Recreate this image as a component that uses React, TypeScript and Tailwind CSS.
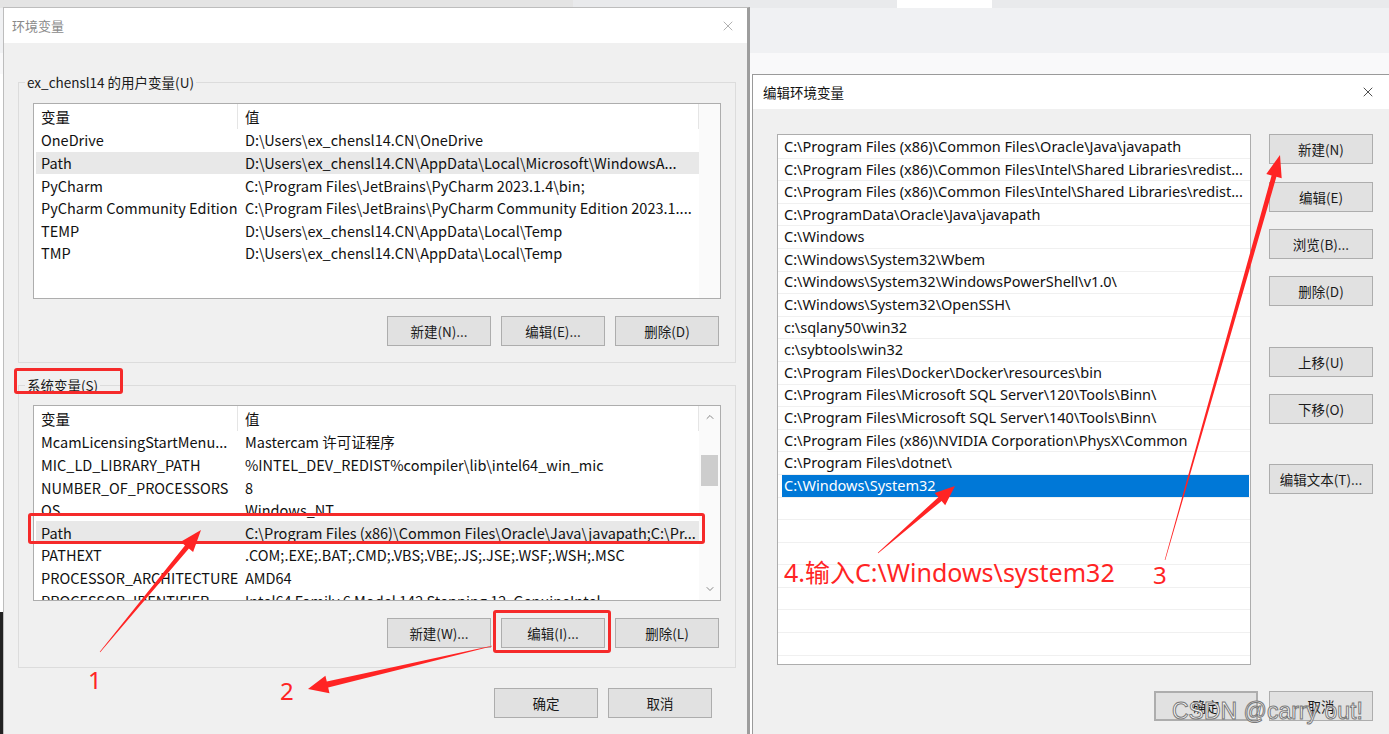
import type { ReactNode } from "react";
import { X, ChevronUp, ChevronDown } from "lucide-react";

const cjk = "font-['Noto_Sans_CJK_SC','Noto_Sans',sans-serif]";
const seg = "font-['Noto_Sans','Noto_Sans_CJK_SC',sans-serif]";

const userVars: [string, string][] = [
  ["OneDrive", "D:\\Users\\ex_chensl14.CN\\OneDrive"],
  ["Path", "D:\\Users\\ex_chensl14.CN\\AppData\\Local\\Microsoft\\WindowsA..."],
  ["PyCharm", "C:\\Program Files\\JetBrains\\PyCharm 2023.1.4\\bin;"],
  ["PyCharm Community Edition", "C:\\Program Files\\JetBrains\\PyCharm Community Edition 2023.1...."],
  ["TEMP", "D:\\Users\\ex_chensl14.CN\\AppData\\Local\\Temp"],
  ["TMP", "D:\\Users\\ex_chensl14.CN\\AppData\\Local\\Temp"],
];

const sysVars: [string, string][] = [
  ["McamLicensingStartMenu...", "Mastercam 许可证程序"],
  ["MIC_LD_LIBRARY_PATH", "%INTEL_DEV_REDIST%compiler\\lib\\intel64_win_mic"],
  ["NUMBER_OF_PROCESSORS", "8"],
  ["OS", "Windows_NT"],
  ["Path", "C:\\Program Files (x86)\\Common Files\\Oracle\\Java\\javapath;C:\\Pr..."],
  ["PATHEXT", ".COM;.EXE;.BAT;.CMD;.VBS;.VBE;.JS;.JSE;.WSF;.WSH;.MSC"],
  ["PROCESSOR_ARCHITECTURE", "AMD64"],
  ["PROCESSOR_IDENTIFIER", "Intel64 Family 6 Model 142 Stepping 12, GenuineIntel"],
];

const paths = [
  "C:\\Program Files (x86)\\Common Files\\Oracle\\Java\\javapath",
  "C:\\Program Files (x86)\\Common Files\\Intel\\Shared Libraries\\redist...",
  "C:\\Program Files (x86)\\Common Files\\Intel\\Shared Libraries\\redist...",
  "C:\\ProgramData\\Oracle\\Java\\javapath",
  "C:\\Windows",
  "C:\\Windows\\System32\\Wbem",
  "C:\\Windows\\System32\\WindowsPowerShell\\v1.0\\",
  "C:\\Windows\\System32\\OpenSSH\\",
  "c:\\sqlany50\\win32",
  "c:\\sybtools\\win32",
  "C:\\Program Files\\Docker\\Docker\\resources\\bin",
  "C:\\Program Files\\Microsoft SQL Server\\120\\Tools\\Binn\\",
  "C:\\Program Files\\Microsoft SQL Server\\140\\Tools\\Binn\\",
  "C:\\Program Files (x86)\\NVIDIA Corporation\\PhysX\\Common",
  "C:\\Program Files\\dotnet\\",
  "C:\\Windows\\System32",
];

function Btn({ children, className = "" }: { children: ReactNode; className?: string }) {
  return (
    <button
      className={`flex h-[30px] w-[104px] shrink-0 items-center justify-center border border-[#adadad] bg-[#e1e1e1] text-[13.5px] text-[#1a1a1a] ${className}`}
    >
      {children}
    </button>
  );
}

function VarList({ rows, selected, scroll }: { rows: [string, string][]; selected: number; scroll?: boolean }) {
  return (
    <div className="flex h-[196px] overflow-hidden border border-[#adadad] bg-white text-[14.5px] text-[#111]">
      <div className="min-w-0 flex-1 overflow-hidden pl-[2px]">
        <div className="flex h-[25px] items-center">
          <div className="flex h-full w-[202px] items-center border-r border-[#e5e5e5] pl-[5px]">变量</div>
          <div className="flex h-full flex-1 items-center border-r border-[#e5e5e5] pl-[7px]">值</div>
        </div>
        {rows.map(([k, v], i) => (
          <div
            key={k + i}
            className={`flex h-[22.6px] items-center whitespace-nowrap ${i === selected ? "bg-[#e8e8e8]" : ""}`}
          >
            <div className="w-[202px] shrink-0 overflow-hidden pl-[5px]">{k}</div>
            <div className="min-w-0 flex-1 overflow-hidden pl-[7px]">{v}</div>
          </div>
        ))}
      </div>
      <div className="flex w-[21px] shrink-0 flex-col items-center bg-[#fafafa]">
        {scroll && (
          <>
            <div className="flex h-[22px] items-center justify-center text-[#606060]">
              <ChevronUp size={12} strokeWidth={1.5} />
            </div>
            <div className="flex-1">
              <div className="mt-[27px] h-[31px] w-[17px] bg-[#cdcdcd]" />
            </div>
            <div className="flex h-[22px] items-center justify-center text-[#606060]">
              <ChevronDown size={12} strokeWidth={1.5} />
            </div>
          </>
        )}
      </div>
    </div>
  );
}

function arrow(x1: number, y1: number, x2: number, y2: number, w0: number, w1: number, L: number, H: number) {
  const dx = x2 - x1;
  const dy = y2 - y1;
  const len = Math.hypot(dx, dy);
  const ux = dx / len;
  const uy = dy / len;
  const nx = -uy;
  const ny = ux;
  const bx = x2 - ux * L;
  const by = y2 - uy * L;
  const pts = [
    [x1 + (nx * w0) / 2, y1 + (ny * w0) / 2],
    [bx + (nx * w1) / 2, by + (ny * w1) / 2],
    [bx + nx * H, by + ny * H],
    [x2, y2],
    [bx - nx * H, by - ny * H],
    [bx - (nx * w1) / 2, by - (ny * w1) / 2],
    [x1 - (nx * w0) / 2, y1 - (ny * w0) / 2],
  ];
  return pts.map((p) => `${p[0].toFixed(1)},${p[1].toFixed(1)}`).join(" ");
}

export default function App() {
  return (
    <div className={`relative h-[734px] w-[1389px] overflow-hidden bg-white ${cjk}`}>
      {/* browser behind the dialogs */}
      <div className="flex h-[8px]">
        <div className="w-[573px] bg-[#e4e4e4]" />
        <div className="w-[324px] bg-[#e9eaec]" />
        <div className="w-[95px] bg-white" />
        <div className="flex-1 bg-[#e9eaec]" />
      </div>
      <div className="h-[45px] bg-[#f0f1f3]" />
      <div className="h-[21px] bg-[#f9f9fa]" />
      <div className="absolute bottom-0 left-0 h-[122px] w-[3px] bg-[#222]" />

      {/* 环境变量 */}
      <div className="absolute left-[3px] top-[7px] h-[740px] w-[747px] border border-r-[3px] border-[#bdbdbd] border-r-[#9d9d9d] bg-[#f0f0f0]">
        <div className="flex h-[35px] items-center justify-between bg-white pl-[8px] pr-[11px]">
          <span className="text-[13px] text-[#8a8a8a]">环境变量</span>
          <X size={16} strokeWidth={1} className="text-[#8a8a8a]" />
        </div>
        <div className="pl-[14px] pr-[11px] pt-[30px]">
          <fieldset className="border border-[#dcdcdc] px-[6px] pb-[16px] pt-[12px]">
            <legend className="px-[2px] text-[13.5px] leading-[18px] text-[#1a1a1a]">ex_chensl14 的用户变量(U)</legend>
            <div className="px-[8px]">
              <VarList rows={userVars} selected={1} />
              <div className="mr-[2px] mt-[17px] flex justify-end gap-[10px]">
                <Btn>新建(N)...</Btn>
                <Btn>编辑(E)...</Btn>
                <Btn>删除(D)</Btn>
              </div>
            </div>
          </fieldset>
          <fieldset className="mt-[13px] border border-[#dcdcdc] px-[6px] pb-[19px] pt-[11px]">
            <legend className="px-[2px] text-[13.5px] leading-[18px] text-[#1a1a1a]">系统变量(S)</legend>
            <div className="px-[8px]">
              <VarList rows={sysVars} selected={4} scroll />
              <div className="mr-[2px] mt-[17px] flex justify-end gap-[10px]">
                <Btn>新建(W)...</Btn>
                <Btn>编辑(I)...</Btn>
                <Btn>删除(L)</Btn>
              </div>
            </div>
          </fieldset>
          <div className="mr-[24px] mt-[20px] flex justify-end gap-[10px]">
            <Btn>确定</Btn>
            <Btn>取消</Btn>
          </div>
        </div>
      </div>

      {/* 编辑环境变量 */}
      <div className="absolute left-[752px] top-[74px] h-[680px] w-[640px] border border-[#9a9a9a] bg-[#f0f0f0]">
        <div className="flex h-[34px] items-center justify-between bg-white pl-[10px] pr-[15px]">
          <span className="text-[13.5px] text-[#111]">编辑环境变量</span>
          <X size={16} strokeWidth={1.2} className="text-[#222]" />
        </div>
        <div className="pl-[24px] pt-[25px]">
          <div className="flex gap-[18px]">
            <div className={`h-[531px] w-[474px] overflow-hidden border border-[#adadad] bg-white pt-[1px] text-[14.5px] text-[#111] ${seg}`}>
              {[...paths, ...Array(9).fill("")].map((p, i) => (
                <div key={i} className="flex h-[22.6px] border-b border-[#f0f0f0] pl-[4px]">
                  <div
                    className={`mr-[1px] flex min-w-0 flex-1 items-center overflow-hidden whitespace-nowrap pl-[2px] ${
                      i === 15 ? "bg-[#0078d7] text-white" : ""
                    }`}
                  >
                    {p}
                  </div>
                </div>
              ))}
            </div>
            <div className="flex flex-col">
              <Btn>新建(N)</Btn>
              <Btn className="mt-[18px]">编辑(E)</Btn>
              <Btn className="mt-[17px]">浏览(B)...</Btn>
              <Btn className="mt-[17px]">删除(D)</Btn>
              <Btn className="mt-[41px]">上移(U)</Btn>
              <Btn className="mt-[17px]">下移(O)</Btn>
              <Btn className="mt-[40px]">编辑文本(T)...</Btn>
            </div>
          </div>
          <div className="mt-[26px] flex w-[596px] justify-end gap-[11px]">
            <Btn className="border-2 border-[#0078d7]">确定</Btn>
            <Btn>取消</Btn>
          </div>
        </div>
      </div>

      {/* annotations */}
      <div className="absolute left-[14px] top-[368px] h-[26px] w-[109px] rounded-[3px] border-[3px] border-[#f52a2a]" />
      <div className="absolute left-[28px] top-[513px] h-[31px] w-[677px] rounded-[3px] border-[3px] border-[#f52a2a]" />
      <div className="absolute left-[493px] top-[610px] h-[43px] w-[118px] rounded-[3px] border-[3px] border-[#f52a2a]" />

      <svg className="pointer-events-none absolute left-0 top-0" width="1389" height="734">
        <g fill="#ff2424">
          <polygon points={arrow(100, 652, 201, 530, 0.6, 5, 22, 8)} />
          <polygon points={arrow(492, 646, 308, 689, 0.6, 6, 20, 9)} />
          <polygon points={arrow(878, 553, 955, 486, 0.6, 5, 20, 8)} />
          <polygon points={arrow(1165, 560, 1280, 155, 0.6, 5, 22, 8)} />
        </g>
      </svg>

      <span className={`absolute left-[88px] top-[664px] text-[24px] leading-[32px] text-[#ff2424] ${seg}`}>1</span>
      <span className={`absolute left-[280px] top-[675px] text-[24px] leading-[32px] text-[#ff2424] ${seg}`}>2</span>
      <span className={`absolute left-[1153px] top-[559px] text-[24px] leading-[32px] text-[#ff2424] ${seg}`}>3</span>
      <span className={`absolute left-[784px] top-[555px] whitespace-nowrap text-[25px] leading-[34px] text-[#ff2424] ${seg}`}>
        4.输入C:\Windows\system32
      </span>

      <span className="absolute left-[1172px] top-[696px] whitespace-nowrap font-['Liberation_Sans',sans-serif] text-[23px] leading-[30px] text-white [-webkit-text-stroke:1px_#7a7a7a]">
        CSDN @carry out!
      </span>
    </div>
  );
}
